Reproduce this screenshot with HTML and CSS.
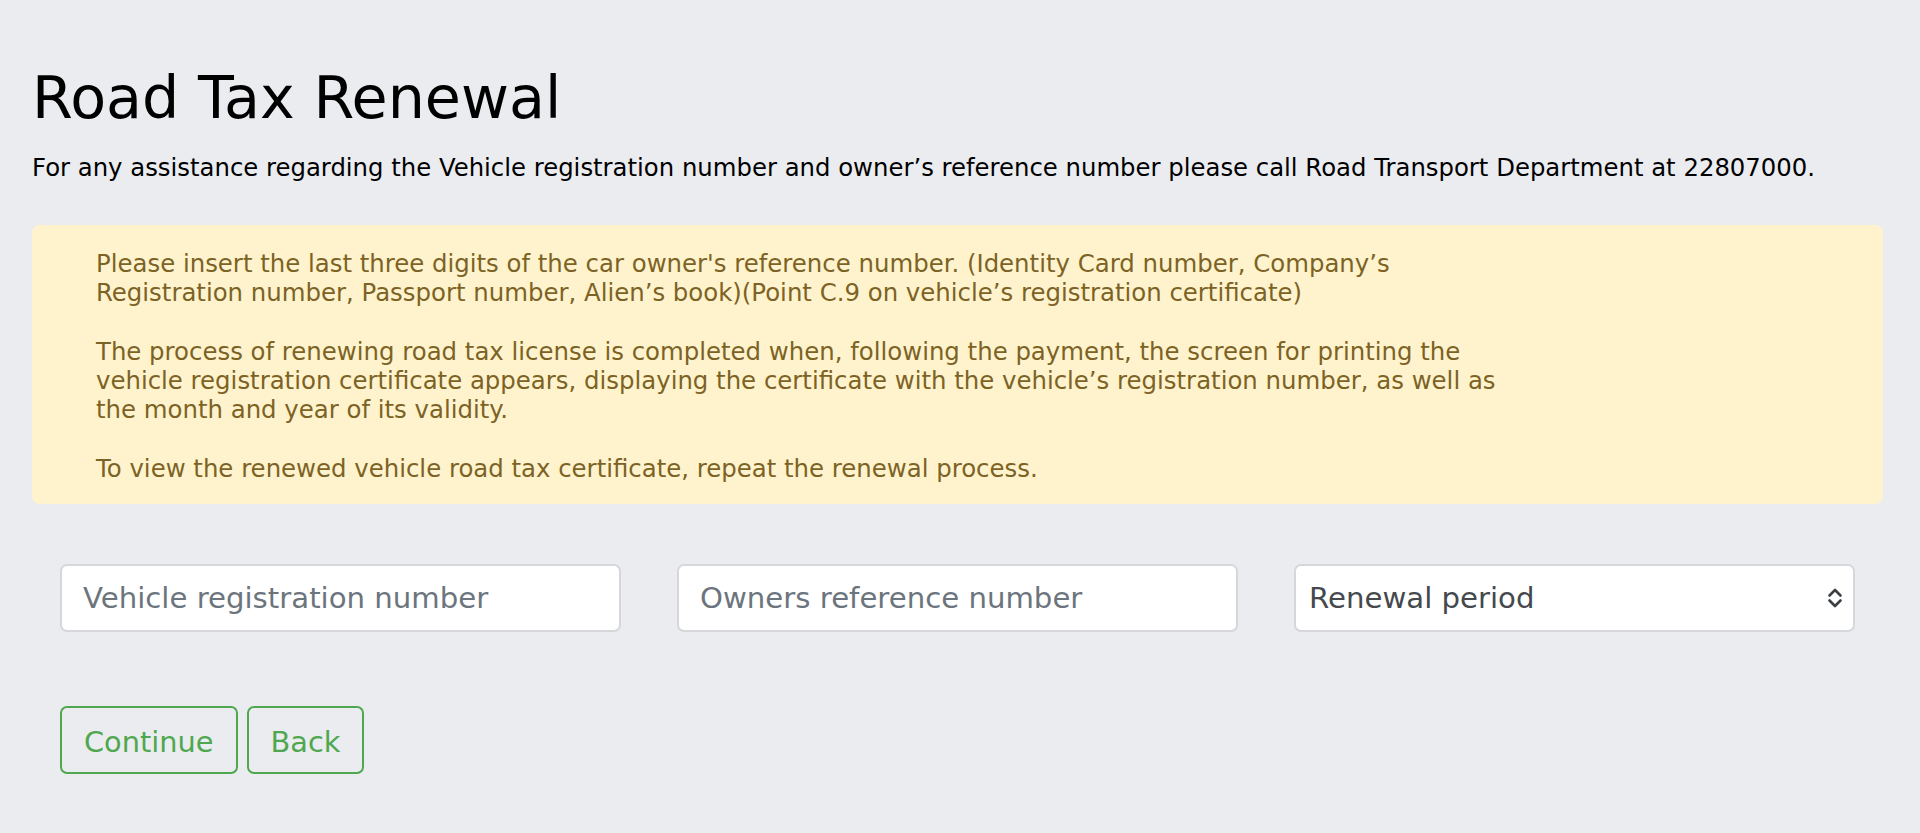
FILE: index.html
```html
<!DOCTYPE html>
<html lang="en">
<head>
<meta charset="utf-8">
<title>Road Tax Renewal</title>
<link rel="stylesheet" href="styles.css">
</head>
<body>
<main class="page">
  <h1 class="title">Road Tax Renewal</h1>
  <p class="lead">For any assistance regarding the Vehicle registration number and owner’s reference number please call Road Transport Department at 22807000.</p>

  <div class="alert">
    <div class="alert-text">
      <p>Please insert the last three digits of the car owner's reference number. (Identity Card number, Company’s Registration number, Passport number, Alien’s book)(Point C.9 on vehicle’s registration certificate)</p>
      <p>The process of renewing road tax license is completed when, following the payment, the screen for printing the vehicle registration certificate appears, displaying the certificate with the vehicle’s registration number, as well as the month and year of its validity.</p>
      <p>To view the renewed vehicle road tax certificate, repeat the renewal process.</p>
    </div>
  </div>

  <form class="form" onsubmit="return false">
    <div class="fields">
      <div class="col">
        <input class="control" type="text" placeholder="Vehicle registration number">
      </div>
      <div class="col">
        <input class="control" type="text" placeholder="Owners reference number">
      </div>
      <div class="col">
        <div class="select-wrap">
          <select class="control select">
            <option>Renewal period</option>
            <option>6 months</option>
            <option>12 months</option>
          </select>
          <svg class="chevrons" width="16" height="22" viewBox="0 0 16 22" aria-hidden="true">
            <path d="M2.5 8.5 L8 3 L13.5 8.5" fill="none" stroke="#3b3e43" stroke-width="2.6" stroke-linecap="round" stroke-linejoin="round"/>
            <path d="M2.5 13.5 L8 19 L13.5 13.5" fill="none" stroke="#3b3e43" stroke-width="2.6" stroke-linecap="round" stroke-linejoin="round"/>
          </svg>
        </div>
      </div>
    </div>
    <div class="actions">
      <button class="btn" type="submit">Continue</button>
      <button class="btn" type="button">Back</button>
    </div>
  </form>
</main>
</body>
</html>
```
FILE: styles.css
```css
html, body {
  margin: 0;
  padding: 0;
}
body {
  background: #ebecf0;
  font-family: "DejaVu Sans", Verdana, sans-serif;
  color: #000;
}
.page {
  padding: 64px 37px 0 32px;
}
.title {
  margin: 0 0 17px;
  font-size: 58.7px;
  font-weight: 400;
  line-height: 69px;
  color: #000;
}
.lead {
  margin: 0 0 39px;
  font-size: 24.35px;
  line-height: 36px;
}
.alert {
  background: #fff3cd;
  color: #7c6325;
  border-radius: 8px;
  padding: 24px 40px 21px 64px;
  font-size: 24.4px;
  line-height: 29.3px;
}
.alert-text {
  max-width: 1415px;
}
.alert-text p {
  margin: 0 0 29.3px;
}
.alert-text p:last-child {
  margin-bottom: 0;
}
.form {
  margin: 60px 0 0;
}
.fields {
  display: grid;
  grid-template-columns: repeat(3, 1fr);
}
.col {
  padding: 0 28px;
}
.control {
  box-sizing: border-box;
  width: 100%;
  height: 68px;
  border: 2px solid #d5d7db;
  border-radius: 7px;
  background: #fff;
  padding: 0 21px;
  font-family: "DejaVu Sans", Verdana, sans-serif;
  font-size: 29.2px;
  color: #495057;
  outline: none;
}
.control::placeholder {
  color: #6c757d;
  opacity: 1;
}
.select-wrap {
  position: relative;
}
.select {
  appearance: none;
  -webkit-appearance: none;
  padding: 0 50px 0 13px;
  color: #45494e;
}
.chevrons {
  position: absolute;
  right: 12px;
  top: 23px;
  pointer-events: none;
}
.actions {
  display: flex;
  gap: 9px;
  margin: 74px 0 0;
  padding: 0 28px;
}
.btn {
  box-sizing: border-box;
  height: 68px;
  border: 2px solid #4fa84f;
  border-radius: 7px;
  background: transparent;
  color: #4fa84f;
  padding: 13px 22px 9px;
  font-family: "DejaVu Sans", Verdana, sans-serif;
  font-size: 28.8px;
  line-height: 42px;
  cursor: pointer;
}
```
